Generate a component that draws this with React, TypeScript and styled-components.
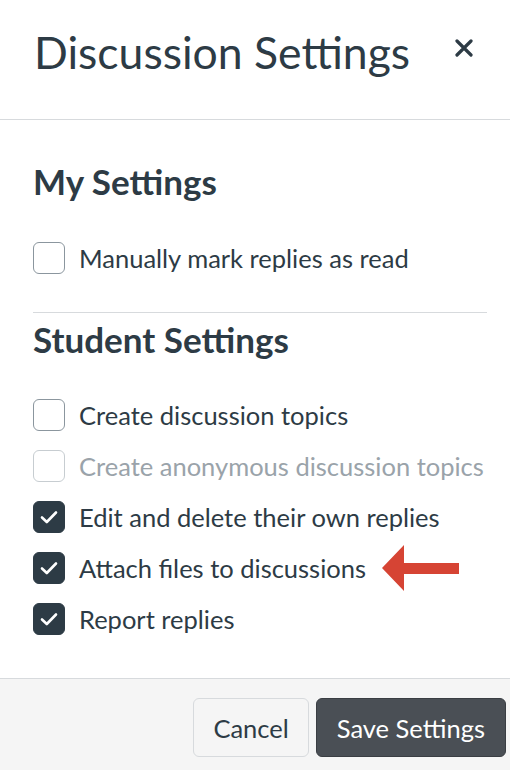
import React from 'react';
import styled, { createGlobalStyle } from 'styled-components';

const GlobalStyle = createGlobalStyle`
  html, body {
    margin: 0;
    padding: 0;
    background: #ffffff;
  }
  body {
    font-family: Lato, "Open Sans", sans-serif;
    color: #2d3b45;
  }
`;

const Modal = styled.div`
  width: 510px;
  height: 770px;
  display: flex;
  flex-direction: column;
  overflow: hidden;
`;

const Header = styled.header`
  height: 120px;
  border-bottom: 1px solid #d7dadd;
  display: flex;
  align-items: flex-start;
  justify-content: space-between;
  padding: 25px 37px 0 34px;
  box-sizing: border-box;
`;

const Title = styled.h1`
  margin: 0;
  font-size: 44.5px;
  font-weight: 400;
  color: #2d3b45;
  line-height: 1.2;
`;

const CloseButton = styled.button`
  border: 0;
  background: none;
  padding: 0;
  margin-top: 14px;
  width: 18px;
  height: 18px;
  display: flex;
  cursor: pointer;
  color: #2d3b45;
`;

const Body = styled.main`
  flex: 1;
  padding: 40px 23px 0 33px;
`;

const SectionTitle = styled.h2`
  margin: 0;
  font-size: 35px;
  font-weight: 700;
  line-height: 42px;
  color: #2d3b45;
`;

const List = styled.div<{ $top: number }>`
  display: flex;
  flex-direction: column;
  gap: 19px;
  margin-top: ${({ $top }) => $top}px;
`;

const Row = styled.label<{ $disabled?: boolean }>`
  display: flex;
  align-items: center;
  gap: 14px;
  height: 32px;
  font-size: 25.5px;
  line-height: 32px;
  color: ${({ $disabled }) => ($disabled ? '#9aa3aa' : '#2d3b45')};
`;

const Box = styled.span<{ $checked?: boolean; $disabled?: boolean }>`
  width: 32px;
  height: 32px;
  box-sizing: border-box;
  border-radius: 6px;
  flex-shrink: 0;
  display: flex;
  align-items: center;
  justify-content: center;
  background: ${({ $checked }) => ($checked ? '#2d3b45' : '#ffffff')};
  border: 1px solid
    ${({ $checked, $disabled }) =>
      $checked ? '#2d3b45' : $disabled ? '#c7cdd1' : '#8b969e'};
`;

const Divider = styled.hr`
  border: 0;
  border-top: 1px solid #d7dadd;
  margin: 38px 0 5px 0;
`;

const Arrow = styled.svg`
  margin: -7px 0 -7px 2px;
  flex-shrink: 0;
`;

const Footer = styled.footer`
  height: 92px;
  box-sizing: border-box;
  background: #f5f5f5;
  border-top: 1px solid #d7dadd;
  display: flex;
  align-items: flex-start;
  justify-content: flex-end;
  gap: 7px;
  padding: 19px 4px 0 0;
`;

const Button = styled.button<{ $primary?: boolean }>`
  height: 59px;
  border-radius: 6px;
  font-family: Lato, "Open Sans", sans-serif;
  font-size: 25.5px;
  padding: 0 ${({ $primary }) => ($primary ? 20 : 19)}px;
  cursor: pointer;
  background: ${({ $primary }) => ($primary ? '#4a4f55' : '#f5f5f5')};
  color: ${({ $primary }) => ($primary ? '#ffffff' : '#2d3b45')};
  border: 1px solid ${({ $primary }) => ($primary ? '#3a3e43' : '#d7dadd')};
`;

const Check = () => (
  <svg width="18" height="14" viewBox="0 0 18 14">
    <path
      d="M2 7.5 L6.8 12 L16 2.5"
      fill="none"
      stroke="#fff"
      strokeWidth="2.6"
      strokeLinecap="round"
      strokeLinejoin="round"
    />
  </svg>
);

interface Option {
  label: string;
  checked?: boolean;
  disabled?: boolean;
  arrow?: boolean;
}

const studentOptions: Option[] = [
  { label: 'Create discussion topics' },
  { label: 'Create anonymous discussion topics', disabled: true },
  { label: 'Edit and delete their own replies', checked: true },
  { label: 'Attach files to discussions', checked: true, arrow: true },
  { label: 'Report replies', checked: true },
];

const OptionRow = ({ label, checked, disabled, arrow }: Option) => (
  <Row $disabled={disabled}>
    <Box $checked={checked} $disabled={disabled}>
      {checked && <Check />}
    </Box>
    {label}
    {arrow && (
      <Arrow width="78" height="46" viewBox="0 0 78 46">
        <polygon points="0,23 22,0 22,18 77,18 77,29 22,29 22,46" fill="#d64434" />
      </Arrow>
    )}
  </Row>
);

export default function App() {
  return (
    <>
      <GlobalStyle />
      <Modal>
        <Header>
          <Title>Discussion Settings</Title>
          <CloseButton aria-label="Close">
            <svg width="18" height="18" viewBox="0 0 18 18">
              <path
                d="M2 2 L16 16 M16 2 L2 16"
                stroke="#2d3b45"
                strokeWidth="3.2"
                strokeLinecap="round"
              />
            </svg>
          </CloseButton>
        </Header>
        <Body>
          <SectionTitle>My Settings</SectionTitle>
          <List $top={40}>
            <OptionRow label="Manually mark replies as read" />
          </List>
          <Divider />
          <SectionTitle>Student Settings</SectionTitle>
          <List $top={39}>
            {studentOptions.map((o) => (
              <OptionRow key={o.label} {...o} />
            ))}
          </List>
        </Body>
        <Footer>
          <Button>Cancel</Button>
          <Button $primary>Save Settings</Button>
        </Footer>
      </Modal>
    </>
  );
}
